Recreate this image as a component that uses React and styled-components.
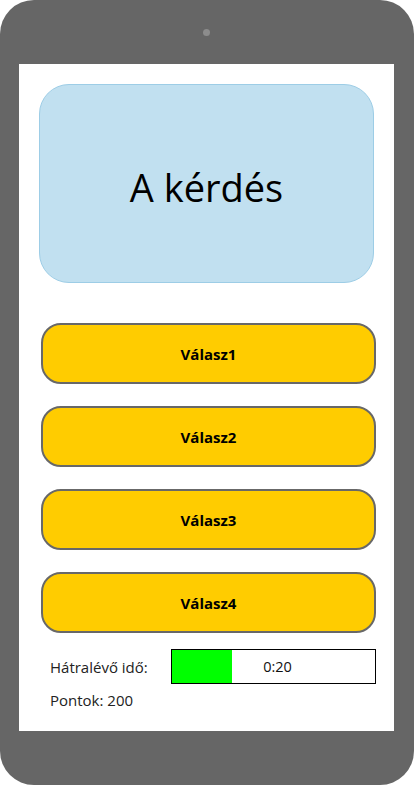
import styled, { createGlobalStyle } from 'styled-components'

const GlobalStyle = createGlobalStyle`
body {
    margin: 0;
    background: #fff;
    font-family: "Open Sans", "Noto Sans", sans-serif;
}
`
const Phone = styled.div`
width: 414px;
height: 785px;
box-sizing: border-box;
background: #666666;
border-radius: 34px;
padding: 0 20px 0 19px;
display: flex;
flex-direction: column;
align-items: center;
`
const Camera = styled.div`
width: 7px;
height: 7px;
margin-top: 29px;
margin-bottom: 28px;
border-radius: 50%;
background: #8c8c8c;
`
const Screen = styled.div`
width: 375px;
height: 667px;
background: #fff;
box-sizing: border-box;
padding: 20px 0 0 20px;
display: flex;
flex-direction: column;
`
const Question = styled.div`
width: 335px;
height: 199px;
box-sizing: border-box;
background: #c1e0f0;
border: 1px solid #9dcde6;
border-radius: 30px;
display: flex;
justify-content: center;
align-items: center;
font-size: 38px;
color: #000;
padding-top: 6px;
`
const Answers = styled.div`
margin-top: 40px;
margin-left: 2px;
display: flex;
flex-direction: column;
gap: 22px;
`
const Answer = styled.button`
width: 335px;
height: 61px;
box-sizing: border-box;
background: #ffcc00;
border: 2px solid #686868;
border-radius: 20px;
font-family: "Open Sans", "Noto Sans", sans-serif;
font-weight: 700;
font-size: 15px;
color: #000;
cursor: pointer;
`
const Timer = styled.div`
margin-top: 16px;
display: flex;
align-items: center;
padding-left: 11px;
`
const Label = styled.span`
font-size: 15px;
color: #222;
width: 121px;
`
const Bar = styled.div`
position: relative;
width: 205px;
height: 35px;
box-sizing: border-box;
border: 1px solid #000;
display: flex;
align-items: center;
justify-content: center;
font-size: 14.5px;
color: #111;
`
const Fill = styled.div`
position: absolute;
left: 0;
top: 0;
bottom: 0;
background: #00ff00;
`
const BarText = styled.span`
position: relative;
margin-left: 8px;
`
const Score = styled.div`
margin-top: 6px;
padding-left: 11px;
font-size: 15px;
color: #222;
`

const answers = ['Válasz1', 'Válasz2', 'Válasz3', 'Válasz4']

function App() {
    const remaining = 20
    const total = 68

    return (
        <>
            <GlobalStyle />
            <Phone>
                <Camera />
                <Screen>
                    <Question>A kérdés</Question>
                    <Answers>
                        {answers.map(a => <Answer key={a}>{a}</Answer>)}
                    </Answers>
                    <Timer>
                        <Label>Hátralévő idő:</Label>
                        <Bar>
                            <Fill style={{ width: `${(remaining / total) * 100}%` }} />
                            <BarText>0:{remaining}</BarText>
                        </Bar>
                    </Timer>
                    <Score>Pontok: 200</Score>
                </Screen>
            </Phone>
        </>
    )
}

export default App
